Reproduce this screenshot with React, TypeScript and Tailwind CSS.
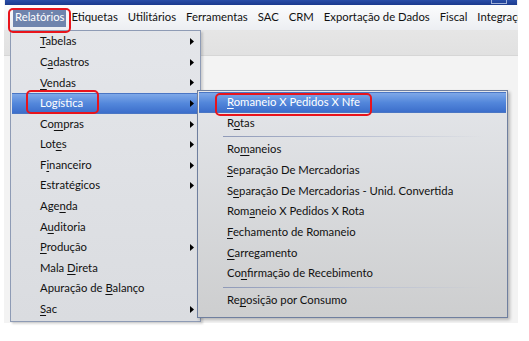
import React from 'react';

type Item = { label: string; u: number; arrow?: boolean; active?: boolean; sep?: boolean };

const mainItems: Item[] = [
  { label: 'Tabelas', u: 0, arrow: true },
  { label: 'Cadastros', u: 1, arrow: true },
  { label: 'Vendas', u: 0, arrow: true },
  { label: 'Logística', u: -1, arrow: true, active: true },
  { label: 'Compras', u: 2, arrow: true },
  { label: 'Lotes', u: 3, arrow: true },
  { label: 'Financeiro', u: 1, arrow: true },
  { label: 'Estratégicos', u: -1, arrow: true },
  { label: 'Agenda', u: 3 },
  { label: 'Auditoria', u: 1 },
  { label: 'Produção', u: 0, arrow: true },
  { label: 'Mala Direta', u: 5 },
  { label: 'Apuração de Balanço', u: 12 },
  { label: 'Sac', u: 0, arrow: true },
];

const subItems: Item[] = [
  { label: 'Romaneio X Pedidos X Nfe', u: 0, active: true },
  { label: 'Rotas', u: 1 },
  { label: '', u: -1, sep: true },
  { label: 'Romaneios', u: 2 },
  { label: 'Separação De Mercadorias', u: 0 },
  { label: 'Separação De Mercadorias - Unid. Convertida', u: 1 },
  { label: 'Romaneio X Pedidos X Rota', u: 3 },
  { label: 'Fechamento de Romaneio', u: 0 },
  { label: 'Carregamento', u: 0 },
  { label: 'Confirmação de Recebimento', u: 2 },
  { label: '', u: -1, sep: true },
  { label: 'Reposição por Consumo', u: 2 },
];

const topItems = ['Relatórios', 'Etiquetas', 'Utilitários', 'Ferramentas', 'SAC', 'CRM', 'Exportação de Dados', 'Fiscal', 'Integrações'];

function Label({ text, u }: { text: string; u: number }) {
  if (u < 0) return <span>{text}</span>;
  return (
    <span>
      {text.slice(0, u)}
      <span className="underline underline-offset-[2px] decoration-[1px]">{text[u]}</span>
      {text.slice(u + 1)}
    </span>
  );
}

export default function App() {
  return (
    <div
      className="relative w-[529px] h-[341px] bg-white overflow-hidden text-[11.3px] text-[#111]"
      style={{ fontFamily: 'Lato, "Noto Sans", sans-serif' }}
    >
      {/* application window */}
      <div className="ml-[4px] w-[514px] h-[323px] bg-[#efefef] flex flex-col overflow-hidden">
        <div className="h-[5px] shrink-0 ml-[1px] mr-[1px] bg-gradient-to-b from-[#2a4ea8] to-[#1b3a8e] relative">
          <div className="absolute right-[10px] top-0 w-[16px] h-[4px] border border-[#9fb0d8] border-t-0" />
        </div>
        <div className="h-[25px] shrink-0 flex items-center pl-[9px] bg-gradient-to-b from-[#fbfcfd] to-[#eceef2] whitespace-nowrap overflow-hidden">
          {topItems.map((t, i) => (
            <div
              key={t}
              className={
                i === 0
                  ? 'h-[18px] shrink-0 flex items-center px-[2px] bg-[#6f84ad] text-white'
                  : 'h-[18px] shrink-0 flex items-center px-[5px]'
              }
            >
              {t}
            </div>
          ))}
        </div>
        <div className="h-[26px] shrink-0 bg-gradient-to-b from-[#e6e6e6] to-[#e1e1e1] border-b border-[#d6d6d6]" />
        <div className="flex-1 bg-[#f3f3f3]" />
      </div>

      {/* main dropdown */}
      <div className="absolute left-[10px] top-[30px] w-[191px] h-[292px] border border-[#8e9bb5] bg-gradient-to-b from-[#e4e6ea] to-[#dadce0] pt-[0.5px] px-[1px] flex flex-col shadow-[2px_2px_2px_rgba(0,0,0,0.15)]">
        {mainItems.map((it) => (
          <div
            key={it.label}
            className={
              it.active
                ? 'h-[20.6px] flex items-center pl-[28px] pr-[5px] bg-gradient-to-b from-[#7ea8e8] via-[#5387db] to-[#3c6ecb] text-white border-y border-[#4a76c4]'
                : 'h-[20.6px] flex items-center pl-[28px] pr-[5px]'
            }
          >
            <div className="flex-1">
              <Label text={it.label} u={it.u} />
            </div>
            {it.arrow && (
              <svg width="4" height="7" viewBox="0 0 4 7" className="shrink-0">
                <path d="M0 0 L4 3.5 L0 7 Z" fill="#000" />
              </svg>
            )}
          </div>
        ))}
      </div>

      {/* submenu */}
      <div className="absolute left-[197px] top-[90px] w-[311px] h-[228px] border border-[#6f7f9f] bg-gradient-to-b from-[#e4e6ea] to-[#cdcecf] pt-[1px] px-[1px] flex flex-col shadow-[2px_2px_3px_rgba(0,0,0,0.25)]">
        {subItems.map((it, i) =>
          it.sep ? (
            <div key={'s' + i} className="h-[6px] flex items-center pl-[24px]">
              <div className="h-[1px] w-[260px] bg-gradient-to-r from-[#8f9ab8] via-[#b8bfd2] to-transparent" />
            </div>
          ) : (
            <div
              key={it.label}
              className={
                it.active
                  ? 'h-[20.7px] flex items-center pl-[28px] bg-gradient-to-b from-[#7ea8e8] via-[#5387db] to-[#3c6ecb] text-white border-y border-[#4a76c4]'
                  : 'h-[20.7px] flex items-center pl-[28px]'
              }
            >
              <Label text={it.label} u={it.u} />
            </div>
          )
        )}
      </div>

      {/* red annotation outlines */}
      <div className="absolute left-[8px] top-[8px] w-[63px] h-[25px] border-2 border-[#e8141c] rounded-[5px]" />
      <div className="absolute left-[26px] top-[90px] w-[73px] h-[24px] border-2 border-[#e8141c] rounded-[5px]" />
      <div className="absolute left-[215px] top-[93px] w-[157px] h-[23px] border-2 border-[#e8141c] rounded-[5px]" />
    </div>
  );
}
